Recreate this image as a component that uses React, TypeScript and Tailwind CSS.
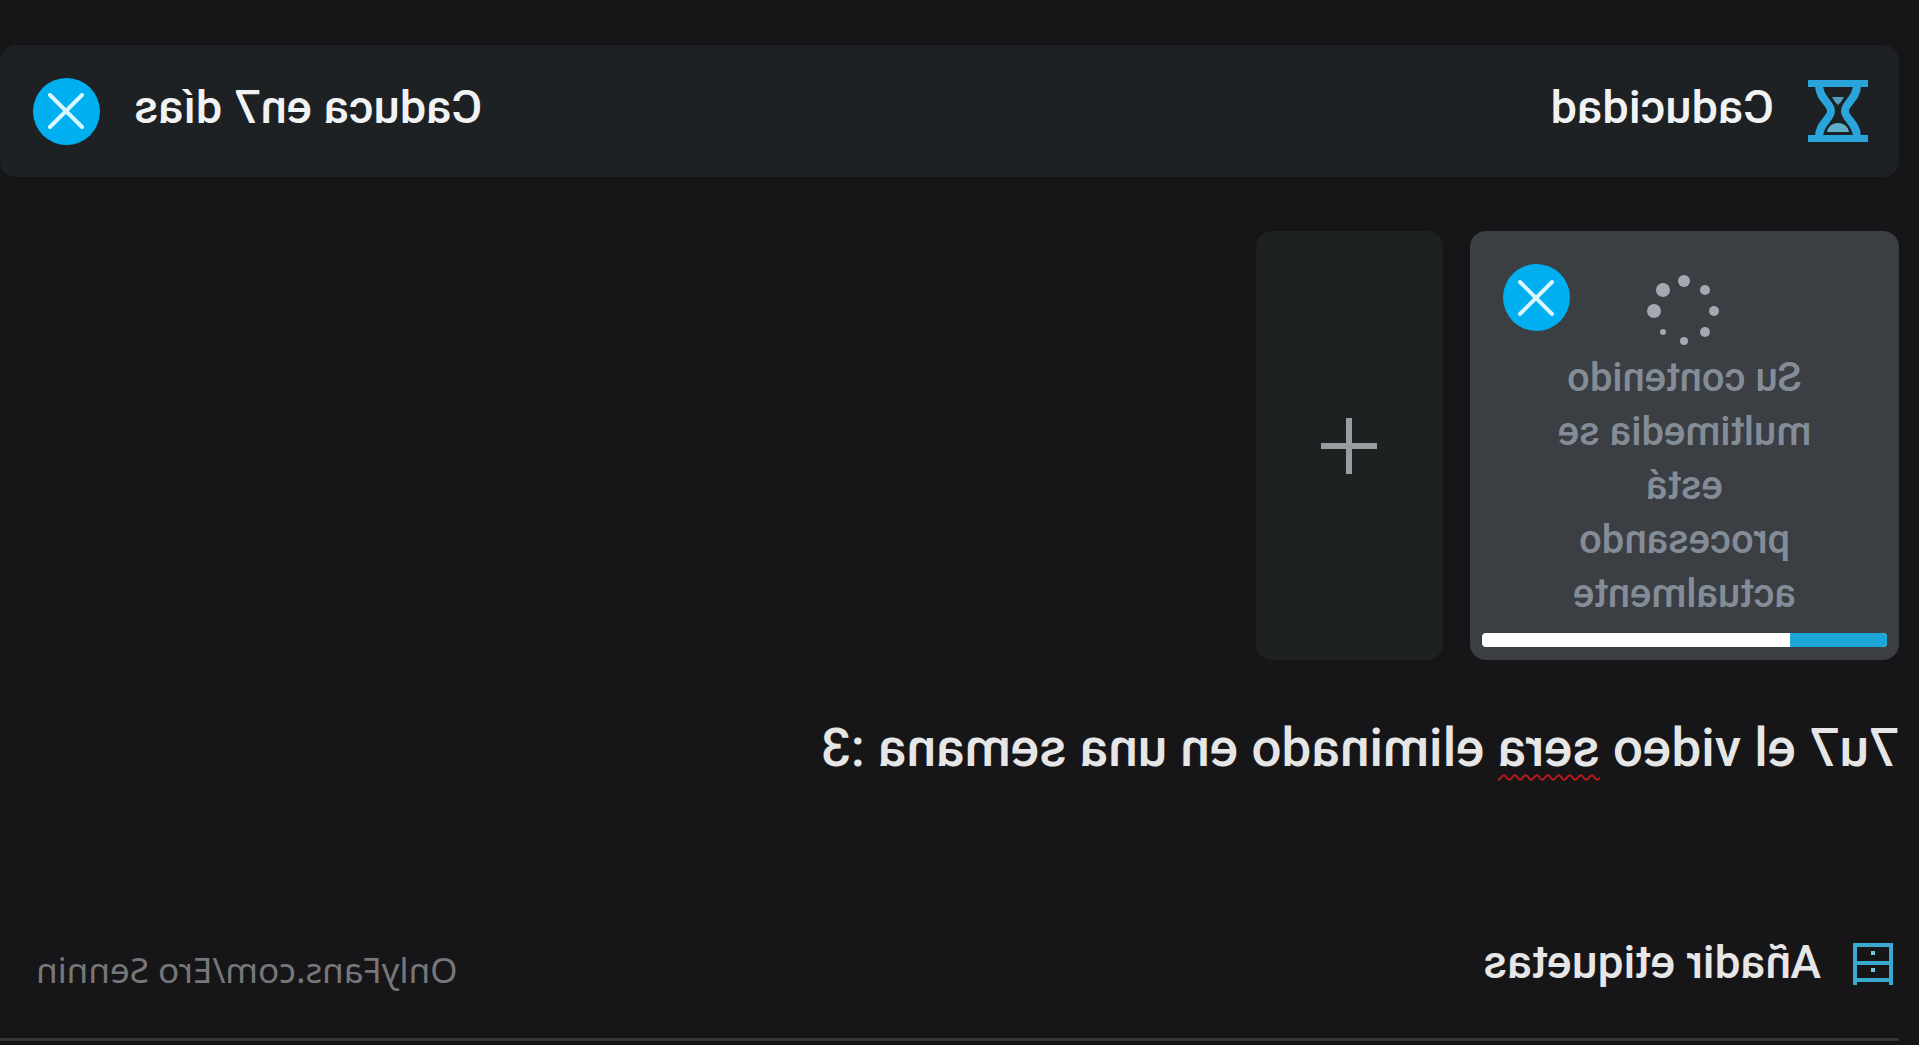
import React from "react";

function CloseButton({ label }: { label: string }) {
  return (
    <button
      type="button"
      aria-label={label}
      className="flex size-[67px] shrink-0 items-center justify-center rounded-full bg-[#00aff0]"
    >
      <svg viewBox="0 0 36 36" className="size-9" fill="none" stroke="#d9f5ff" strokeWidth="4" strokeLinecap="round">
        <path d="M2 2 34 34M34 2 2 34" />
      </svg>
    </button>
  );
}

function HourglassIcon() {
  return (
    <svg viewBox="0 0 60 62" className="h-[62px] w-[60px] shrink-0" fill="none" aria-hidden="true">
      <path d="M0 0H60V7H0ZM0 55H60V62H0Z" fill="#2aa5dc" />
      <path d="M11 5C11 19 23 23 23 31C23 39 11 43 11 57" stroke="#2aa5dc" strokeWidth="8" />
      <path d="M49 5C49 19 37 23 37 31C37 39 49 43 49 57" stroke="#2aa5dc" strokeWidth="8" />
      <path d="M24 17H36L33 22L30 25L27 22Z" fill="#4f9fb8" />
      <path d="M19 52C20 46 25 43 30 43C35 43 40 46 41 52Z" fill="#5fb0c8" />
    </svg>
  );
}

function DrawersIcon() {
  return (
    <svg viewBox="0 0 40 42" className="mt-1 h-[42px] w-10 shrink-0" fill="none" stroke="#3aa9cf" strokeWidth="4" aria-hidden="true">
      <path d="M2 42V2H38V42M2 20H38M2 37H38" />
      <path d="M18 10H22M18 27H22" stroke="#79c4dd" />
    </svg>
  );
}

const dots = [
  { x: 31, y: 7, r: 6 },
  { x: 10, y: 16, r: 5 },
  { x: 1, y: 37, r: 5 },
  { x: 10, y: 58, r: 5 },
  { x: 31, y: 67, r: 4 },
  { x: 52, y: 58, r: 3 },
  { x: 61, y: 37, r: 7 },
  { x: 52, y: 16, r: 7 },
];

function Spinner() {
  return (
    <svg viewBox="-7 0 76 74" className="h-[74px] w-[76px]" fill="#a3a9b0" aria-hidden="true">
      {dots.map((d) => (
        <circle key={`${d.x}-${d.y}`} cx={d.x} cy={d.y} r={d.r} />
      ))}
    </svg>
  );
}

export default function App() {
  return (
    <main className="min-h-screen -scale-x-100 bg-[#161618] pt-[45px] pl-5 font-['Roboto',sans-serif] text-[#f1f2f3]">
      <header className="flex h-[132px] items-center rounded-2xl bg-[#1e2123] pr-[33px] pl-[31px]">
        <HourglassIcon />
        <h2 className="ml-[34px] pb-2 text-[47px] leading-[56px] font-medium">Caducidad</h2>
        <span className="mr-[34px] ml-auto pb-2 text-[47px] leading-[56px] font-medium">Caduca en7 días</span>
        <CloseButton label="Quitar caducidad" />
      </header>

      <section className="mt-[54px] flex gap-[27px]">
        <article className="relative flex h-[429px] w-[429px] flex-col items-center rounded-2xl bg-[#3b3e43] px-3 pt-[43px] pb-[13px]">
          <Spinner />
          <p className="mt-[3px] w-[270px] text-center text-[40px] leading-[54px] font-medium text-[#848d97]">
            Su contenido multimedia se está procesando actualmente
          </p>
          <div className="mt-auto flex h-3.5 w-full overflow-hidden rounded-sm bg-white">
            <div className="w-[24%] bg-[#1ea5d8]" />
          </div>
          <div className="absolute top-[33px] right-[33px]">
            <CloseButton label="Quitar multimedia" />
          </div>
        </article>
        <button
          type="button"
          aria-label="Añadir multimedia"
          className="flex w-[187px] items-center justify-center rounded-2xl bg-[#1d2122]"
        >
          <svg viewBox="0 0 56 56" className="size-14" stroke="#989da0" strokeWidth="6">
            <path d="M28 0V56M0 28H56" />
          </svg>
        </button>
      </section>

      <div
        role="textbox"
        aria-label="Texto de la publicación"
        contentEditable
        suppressContentEditableWarning
        spellCheck={false}
        className="mt-[54px] min-h-[200px] text-[53px] leading-[68px] font-medium text-[#e6e6e7] outline-none"
      >
        7u7 el video <span className="underline decoration-[#c01818] decoration-wavy decoration-2 underline-offset-8">sera</span> eliminado en una semana :3
      </div>

      <footer className="flex h-[127px] items-start border-b-3 border-[#363638] pt-5 pr-9 pl-1.5">
        <button type="button" className="flex items-center gap-8 text-[46px] leading-[56px] font-medium text-[#e6e6e7]">
          <DrawersIcon />
          Añadir etiquetas
        </button>
        <a href="#perfil" className="mt-3 ml-auto font-['Noto_Sans',sans-serif] text-[35px] leading-[48px] text-[#77777a]">
          OnlyFans.com/Ero Sennin
        </a>
      </footer>
    </main>
  );
}
